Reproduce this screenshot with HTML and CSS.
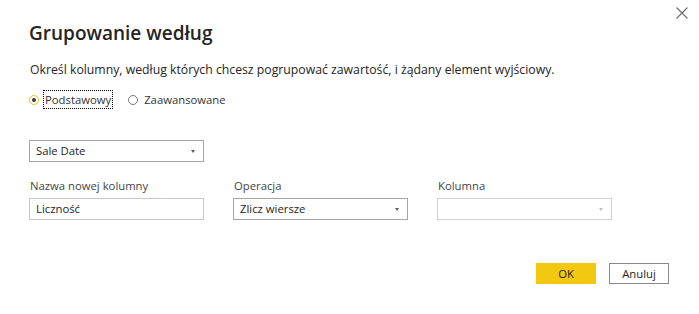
FILE: index.html
```html
<!DOCTYPE html>
<html lang="pl">
<head>
    <meta charset="UTF-8">
    <title>Grupowanie według</title>
    <link rel="stylesheet" href="styles.css">
</head>
<body>
    <div class="dialog">
        <button class="close" aria-label="Zamknij">
            <svg width="12" height="12" viewBox="0 0 12 12"><path d="M0.5 0.5 L11.5 11.5 M11.5 0.5 L0.5 11.5" stroke="#6b6b6b" stroke-width="1.1" fill="none"/></svg>
        </button>

        <h1 class="title">Grupowanie według</h1>
        <p class="desc">Określ kolumny, według których chcesz pogrupować zawartość, i żądany element wyjściowy.</p>

        <div class="radios">
            <label class="radio checked focus"><span class="dot"></span><span class="radio-text">Podstawowy</span></label>
            <label class="radio"><span class="dot"></span><span class="radio-text">Zaawansowane</span></label>
        </div>

        <div class="select group-by">
            <span class="select-text">Sale Date</span>
            <span class="caret"></span>
        </div>

        <div class="fields">
            <div class="field">
                <div class="field-label">Nazwa nowej kolumny</div>
                <div class="input"><span class="select-text">Liczność</span></div>
            </div>
            <div class="field">
                <div class="field-label">Operacja</div>
                <div class="select">
                    <span class="select-text">Zlicz wiersze</span>
                    <span class="caret"></span>
                </div>
            </div>
            <div class="field">
                <div class="field-label">Kolumna</div>
                <div class="select disabled">
                    <span class="select-text"></span>
                    <span class="caret"></span>
                </div>
            </div>
        </div>

        <div class="buttons">
            <button class="btn btn-ok">OK</button>
            <button class="btn btn-cancel">Anuluj</button>
        </div>
    </div>
</body>
</html>
```

FILE: styles.css
```css
body {
    margin: 0;
    background: #fff;
    font-family: 'Open Sans', 'Noto Sans', sans-serif;
    color: #252423;
}
.dialog {
    position: relative;
    width: 699px;
    height: 314px;
    box-sizing: border-box;
    padding: 20px 30px 0 29px;
}
.close {
    position: absolute;
    top: 7px;
    right: 11px;
    width: 12px;
    height: 12px;
    padding: 0;
    border: none;
    background: none;
    display: flex;
}
.title {
    margin: 0;
    font-size: 19px;
    line-height: 26px;
    font-weight: 600;
    color: #252423;
}
.desc {
    margin: 15px 0 0 1px;
    font-size: 12.25px;
    line-height: 18px;
    color: #252423;
}
.radios {
    display: flex;
    align-items: center;
    gap: 15px;
    margin-top: 11px;
    height: 19px;
}
.radio {
    display: flex;
    align-items: center;
    gap: 4px;
    font-size: 11.3px;
    color: #333;
}
.dot {
    width: 10px;
    height: 10px;
    box-sizing: border-box;
    border: 1.5px solid #7a7a7a;
    border-radius: 50%;
    display: flex;
    align-items: center;
    justify-content: center;
}
.radio.checked .dot {
    border-color: #f2c811;
}
.radio.checked .dot::after {
    content: "";
    width: 4px;
    height: 4px;
    border-radius: 50%;
    background: #3b3a39;
}
.radio-text {
    line-height: 17px;
    border: 1px dotted transparent;
    padding: 0 1px;
}
.radio.focus .radio-text {
    border-color: #000;
}
.select, .input {
    width: 175px;
    height: 22px;
    box-sizing: border-box;
    border: 1px solid #a6a6a6;
    display: flex;
    align-items: center;
    justify-content: space-between;
    padding: 0 8px 0 6px;
    font-size: 11.3px;
    color: #252423;
}
.group-by {
    margin-top: 31px;
}
.input {
    border-color: #c8c8c8;
}
.select-text {
    line-height: 16px;
}
.caret {
    width: 0;
    height: 0;
    border-left: 2.5px solid transparent;
    border-right: 2.5px solid transparent;
    border-top: 3px solid #605e5c;
}
.select.disabled {
    border-color: #d0d0d0;
}
.select.disabled .caret {
    border-top-color: #c0c0c0;
}
.fields {
    display: flex;
    gap: 29px;
    margin-top: 16px;
}
.field {
    display: flex;
    flex-direction: column;
    gap: 4px;
}
.field-label {
    font-size: 11.3px;
    line-height: 16px;
    color: #444;
    padding-left: 1px;
}
.buttons {
    display: flex;
    justify-content: flex-end;
    gap: 13px;
    margin-top: 43px;
}
.btn {
    width: 60px;
    height: 21px;
    box-sizing: border-box;
    font-family: inherit;
    font-size: 11.3px;
    padding: 0;
    color: #252423;
}
.btn-ok {
    background: #f2c811;
    border: none;
}
.btn-cancel {
    background: #fff;
    border: 1px solid #8a8886;
}
```
